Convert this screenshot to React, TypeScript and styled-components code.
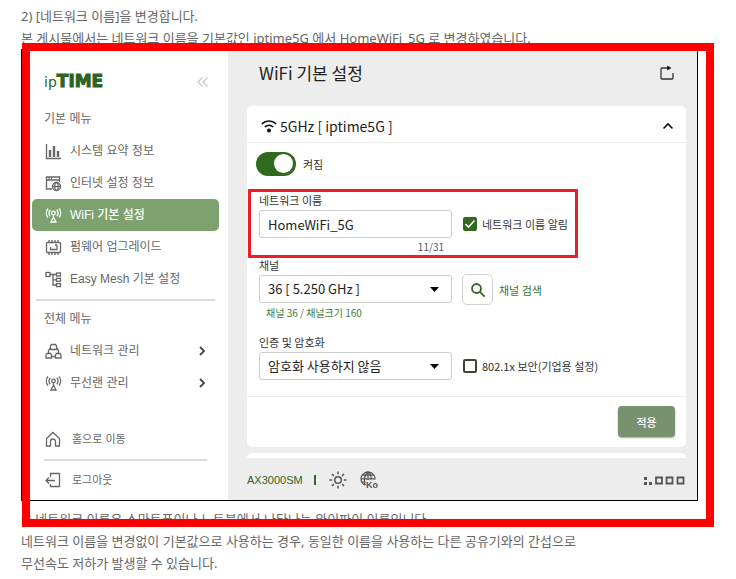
import React, { useState } from "react";
import styled, { createGlobalStyle, css } from "styled-components";

const green = "#2f6a1e";
const sansKr = `"Noto Sans CJK KR", sans-serif`;
const menuFont = `"Liberation Sans", "Noto Sans CJK KR", sans-serif`;

const GlobalStyle = createGlobalStyle`
  *, *::before, *::after { box-sizing: border-box; }
  body { margin: 0; background: #fff; }
  button, input, select { font: inherit; color: inherit; margin: 0; padding: 0; }
  svg { display: block; flex: none; }
`;

const Article = styled.article`
  padding: 5px 38px 0 21px;
  overflow: hidden;
  font: 13px/22px "Noto Sans", ${sansKr};
  color: #666;
`;

const Paragraph = styled.p`
  margin: 0;
  white-space: nowrap;
`;

const Figure = styled.figure`
  position: relative;
  margin: 0 0 7px;
  border: 1px solid #000;
`;

const FigureFrame = styled.div`
  position: absolute;
  inset: -7px -17px -27px 0;
  border: 8px solid #f00;
  pointer-events: none;
`;

const Router = styled.div`
  display: grid;
  grid-template-columns: 206px minmax(0, 1fr);
  background: #ededed;
`;

const Sidebar = styled.aside`
  display: flex;
  flex-direction: column;
  padding: 0 9px 4px 10px;
  background: #fff;
  font: 12px/16px ${menuFont};
  color: #666;
`;

const Brand = styled.div`
  display: flex;
  align-items: center;
  justify-content: space-between;
  height: 51px;
  padding: 12px 10px 0 12px;
`;

const Logo = styled.div`
  display: flex;
  align-items: baseline;
  font: 14px/20px "DejaVu Sans", sans-serif;
  color: #2d641c;
`;

const LogoWide = styled.span`
  font: bold 17px/20px "DejaVu Sans", sans-serif;
  -webkit-text-stroke: 1px #2d641c;
`;

const IconButton = styled.button`
  display: flex;
  border: 0;
  background: none;
`;

const MenuLabel = styled.h2`
  height: 34px;
  margin: 0;
  padding: 2px 12px 0;
  font-size: 12px;
  line-height: 32px;
  font-weight: 400;
`;

const MenuList = styled.nav`
  display: flex;
  flex-direction: column;
`;

const MenuItem = styled.a<{ $active?: boolean; $small?: boolean }>`
  display: flex;
  align-items: center;
  gap: ${(p) => (p.$small ? "10px" : "8px")};
  height: 32px;
  padding: 0 10px 0 13px;
  border-radius: 5px;
  color: inherit;
  font-size: ${(p) => (p.$small ? "11px" : "12px")};
  text-decoration: none;
  ${(p) =>
    p.$active &&
    css`
      background: #7da270;
      color: #fff;
      font-weight: 500;
    `}
`;

const MenuText = styled.span`
  flex: 1;
`;

const Rule = styled.hr<{ $inset?: boolean }>`
  width: auto;
  height: 2px;
  margin: ${(p) => (p.$inset ? "4px 12px 3px" : "4px 4px 0")};
  border: 0;
  background: #dcdcd6;
`;

const Spacer = styled.div`
  flex: 1;
  min-height: 24px;
`;

const Main = styled.main`
  display: flex;
  flex-direction: column;
  font: 11px/18px ${sansKr};
  color: #333;
`;

const TitleBar = styled.header`
  display: flex;
  align-items: center;
  justify-content: space-between;
  height: 56px;
  padding: 0 22px 10px 31px;
`;

const Title = styled.h1`
  margin: 0;
  font-size: 17px;
  line-height: 24px;
  font-weight: 400;
  color: #222;
`;

const Card = styled.section`
  margin: 0 11px 0 19px;
  border-radius: 5px;
  background: #fff;
`;

const NextCard = styled.div`
  height: 5px;
  margin: 6px 11px 0 19px;
  border-radius: 5px 5px 0 0;
  background: #fff;
`;

const CardHeader = styled.header`
  display: flex;
  align-items: center;
  gap: 3px;
  height: 37px;
  padding: 4px 11px 0 14px;
  border-bottom: 1px solid #eee;
  color: #1c1c1c;
`;

const CardTitle = styled.h2`
  flex: 1;
  margin: 0;
  font-size: 14px;
  line-height: 20px;
  font-weight: 400;
`;

const CardBody = styled.div`
  padding: 9px 12px 16px;
`;

const CardFooter = styled.footer`
  display: flex;
  justify-content: flex-end;
  padding: 9px 11px 10px;
  border-top: 1px solid #eee;
`;

const SwitchLabel = styled.label`
  display: flex;
  align-items: center;
  gap: 7px;
  margin: 0 0 15px -3px;
`;

const Switch = styled.input`
  appearance: none;
  width: 40px;
  height: 24px;
  padding: 2px 3px;
  border-radius: 12px;
  background: #999;
  &::before {
    content: "";
    display: block;
    width: 19px;
    height: 19px;
    border-radius: 50%;
    background: #fff;
  }
  &:checked {
    background: ${green};
  }
  &:checked::before {
    margin-left: auto;
  }
`;

const Field = styled.div<{ $spaced?: boolean }>`
  position: relative;
  width: fit-content;
  margin-bottom: ${(p) => (p.$spaced ? "10px" : "0")};
`;

const FieldLabel = styled.label`
  display: block;
  line-height: 19px;
`;

const FieldRow = styled.div`
  display: grid;
  grid-template-columns: 193px max-content;
  align-items: center;
  gap: 11px;
`;

const Highlight = styled.div`
  position: absolute;
  inset: -2px -10px -2px -11px;
  border: 3px solid #ee1c25;
  border-radius: 1px;
  pointer-events: none;
`;

const control = css`
  width: 100%;
  height: 28px;
  padding: 0 8px;
  border: 1px solid #ccc;
  border-radius: 3px;
  background: #fff;
  color: #222;
  font-size: 13px;
`;

const TextInput = styled.input`
  ${control}
`;

const SelectBox = styled.div`
  position: relative;
`;

const Select = styled.select`
  ${control}
  appearance: none;
  display: block;
`;

const Caret = styled.svg`
  position: absolute;
  top: 12px;
  right: 13px;
  pointer-events: none;
`;

const Hint = styled.p<{ $end?: boolean }>`
  width: 193px;
  margin: 0;
  padding: 0 8px 0 7px;
  font-size: 10px;
  line-height: ${(p) => (p.$end ? "18px" : "20px")};
  text-align: ${(p) => (p.$end ? "right" : "left")};
  color: ${(p) => (p.$end ? "#555" : "#44793a")};
`;

const CheckLabel = styled.label`
  display: flex;
  align-items: center;
  gap: 5px;
`;

const CheckHolder = styled.span`
  position: relative;
  display: flex;
`;

const CheckInput = styled.input`
  appearance: none;
  width: 14px;
  height: 14px;
  border: 2px solid #3d4638;
  border-radius: 2px;
  &:checked {
    border-color: ${green};
    background: ${green};
  }
`;

const CheckMark = styled.svg`
  position: absolute;
  inset: 0;
  pointer-events: none;
`;

const SearchGroup = styled.div`
  display: flex;
  align-items: center;
  gap: 6px;
  margin: -1px 0 -2px -1px;
  color: #3b7430;
`;

const SearchButton = styled.button`
  display: grid;
  place-items: center;
  width: 31px;
  height: 31px;
  border: 1px solid #d0d0d0;
  border-radius: 5px;
  background: #fff;
  color: ${green};
`;

const ApplyButton = styled.button`
  width: 57px;
  height: 31px;
  border: 0;
  border-radius: 4px;
  background: #789270;
  color: #fff;
  font-weight: 500;
  box-shadow: 0 1px 2px rgba(0, 0, 0, 0.35);
`;

const StatusBar = styled.footer`
  display: flex;
  align-items: center;
  height: 42px;
  padding: 2px 12px 0 19px;
  font: 11px/16px "Liberation Sans", sans-serif;
  color: #2f641f;
`;

const Divider = styled.span`
  width: 2px;
  height: 10px;
  margin: 0 13px 0 11px;
  background: ${green};
`;

const StatusTools = styled.div`
  display: flex;
  flex: 1;
  gap: 13px;
  color: #555;
`;

type IconName =
  | "chart" | "internet" | "antenna" | "firmware" | "mesh" | "network" | "home" | "logout";

const drawings: Record<IconName, React.ReactNode> = {
  chart: (
    <>
      <path d="M1.5 1v14.500H16" />
      <path d="M5 7v7M9 3v11M13 8v6" strokeWidth="2.4" />
    </>
  ),
  internet: (
    <>
      <path d="M7 14H1.5V2h13v5M1.5 5h13M3.5 3.5h1M6 3.5h1" />
      <circle cx="11.5" cy="11.5" r="4" />
      <ellipse cx="11.5" cy="11.5" rx="1.7" ry="4" />
      <path d="M7.5 11.5h8" />
    </>
  ),
  antenna: (
    <>
      <circle cx="8.500" cy="6" r="1.800" />
      <path d="M8.500 8v3M8.500 10 6 15h5zM5.300 9.200a4.500 4.500 0 0 1 0-6.400M11.700 9.200a4.500 4.500 0 0 0 0-6.400M3 10.500a7 7 0 0 1 0-9M14 10.500a7 7 0 0 0 0-9" />
    </>
  ),
  firmware: (
    <>
      <rect x="1.5" y="3.5" width="14" height="10" rx="1" />
      <path d="M4 1v2.500M7 1v2.500M10 1v2.500M13 1v2.500M4 13.500V16M7 13.500V16M10 13.500V16M13 13.500V16M12 6v4.500H5.500V8M10 6h2" />
    </>
  ),
  mesh: (
    <>
      <rect x="1" y="1.5" width="4" height="4" />
      <rect x="11.500" y="2" width="4" height="3" />
      <rect x="11.500" y="7.300" width="4" height="3" />
      <rect x="11.500" y="12.600" width="4" height="3" />
      <path d="M5 3.500h6.500M8 3.500V14h3.500M8 8.800h3.500" />
    </>
  ),
  network: (
    <>
      <path d="M5.500 6.500V3l1-1.500h4l1 1.500v3.500z" />
      <path d="M1 15v-3l1-1.500h3.500l1 1.500v3zM10.500 15v-3l1-1.500H15l1 1.500v3z" />
      <path d="M5.500 4.500 3.500 7.500v3M11.500 4.500l2 3v3M6.500 13.500h4" />
    </>
  ),
  home: <path d="M1.500 7.500 8 1.500l6.500 6V15h-4v-4.500a2.500 2.500 0 0 0-5 0V15h-4z" />,
  logout: <path d="M5.500 5V1.500h9v13h-9V12M10 8.500H1M4 5.500l-3 3 3 3" />,
};

const Icon = ({ name }: { name: IconName }) => (
  <svg width="17" height="17" viewBox="0 0 17 17" fill="none" stroke="currentColor" strokeWidth="1.300" aria-hidden="true">
    {drawings[name]}
  </svg>
);

const Chevron = () => (
  <svg width="12" height="12" viewBox="0 0 12 12" fill="none" stroke="#444" strokeWidth="1.800" aria-hidden="true">
    <path d="m3 2 4 4-4 4" />
  </svg>
);

const DownCaret = () => (
  <Caret width="9" height="5" viewBox="0 0 9 5" aria-hidden="true">
    <path d="M0 0h9L4.500 5z" fill="#000" />
  </Caret>
);

const Check = ({ label, initial }: { label: string; initial: boolean }) => {
  const [on, setOn] = useState(initial);
  return (
    <CheckLabel>
      <CheckHolder>
        <CheckInput type="checkbox" checked={on} onChange={() => setOn(!on)} />
        {on && (
          <CheckMark width="14" height="14" viewBox="0 0 14 14" fill="none" stroke="#fff" strokeWidth="1.600">
            <path d="m2.500 7 3 3 6-6.500" />
          </CheckMark>
        )}
      </CheckHolder>
      {label}
    </CheckLabel>
  );
};

const basicMenu: { icon: IconName; text: string; active?: boolean }[] = [
  { icon: "chart", text: "시스템 요약 정보" },
  { icon: "internet", text: "인터넷 설정 정보" },
  { icon: "antenna", text: "WiFi 기본 설정", active: true },
  { icon: "firmware", text: "펌웨어 업그레이드" },
  { icon: "mesh", text: "Easy Mesh 기본 설정" },
];

const fullMenu: { icon: IconName; text: string }[] = [
  { icon: "network", text: "네트워크 관리" },
  { icon: "antenna", text: "무선랜 관리" },
];

const SideMenu = () => (
  <Sidebar>
    <Brand>
      <Logo>ip<LogoWide>TIME</LogoWide></Logo>
      <IconButton aria-label="메뉴 접기">
        <svg width="12" height="12" viewBox="0 0 12 12" fill="none" stroke="#c4c4c4" strokeWidth="1.200">
          <path d="M5.500 1.500 1 6l4.500 4.500M10.500 1.500 6 6l4.500 4.500" />
        </svg>
      </IconButton>
    </Brand>
    <MenuLabel>기본 메뉴</MenuLabel>
    <MenuList>
      {basicMenu.map((m) => (
        <MenuItem key={m.text} href="#" $active={m.active}>
          <Icon name={m.icon} />
          <MenuText>{m.text}</MenuText>
        </MenuItem>
      ))}
    </MenuList>
    <Rule />
    <MenuLabel>전체 메뉴</MenuLabel>
    <MenuList>
      {fullMenu.map((m) => (
        <MenuItem key={m.text} href="#">
          <Icon name={m.icon} />
          <MenuText>{m.text}</MenuText>
          <Chevron />
        </MenuItem>
      ))}
    </MenuList>
    <Spacer />
    <MenuItem href="#" $small><Icon name="home" /><MenuText>홈으로 이동</MenuText></MenuItem>
    <Rule $inset />
    <MenuItem href="#" $small><Icon name="logout" /><MenuText>로그아웃</MenuText></MenuItem>
  </Sidebar>
);

const WifiSettings = () => {
  const [enabled, setEnabled] = useState(true);
  const [name, setName] = useState("HomeWiFi_5G");
  return (
    <Main>
      <TitleBar>
        <Title>WiFi 기본 설정</Title>
        <IconButton aria-label="새로고침">
          <svg width="16" height="16" viewBox="0 0 16 16" fill="none" stroke="#333" strokeWidth="1.300">
            <path d="M9 3H3a1 1 0 0 0-1 1v9a1 1 0 0 0 1 1h10a1 1 0 0 0 1-1V8" />
            <path d="M8.500 1v4L12 3z" fill="#111" stroke="#111" strokeWidth=".5" />
          </svg>
        </IconButton>
      </TitleBar>
      <Card>
        <CardHeader>
          <svg width="16" height="16" viewBox="0 0 16 16" fill="none" stroke="#111" strokeWidth="1.600" aria-hidden="true">
            <path d="M.8 5.800a10.500 10.500 0 0 1 14.400 0M3.800 9a6.300 6.300 0 0 1 8.400 0" />
            <circle cx="8" cy="12.500" r="2" fill="#111" stroke="none" />
          </svg>
          <CardTitle>5GHz [ iptime5G ]</CardTitle>
          <IconButton aria-label="접기">
            <svg width="14" height="14" viewBox="0 0 14 14" fill="none" stroke="#111" strokeWidth="1.600">
              <path d="m2.500 9.500 4.500-4.500 4.500 4.500" />
            </svg>
          </IconButton>
        </CardHeader>
        <CardBody>
          <SwitchLabel>
            <Switch type="checkbox" role="switch" checked={enabled} onChange={() => setEnabled(!enabled)} />
            켜짐
          </SwitchLabel>
          <Field>
            <FieldLabel htmlFor="ssid">네트워크 이름</FieldLabel>
            <FieldRow>
              <TextInput id="ssid" type="text" maxLength={31} value={name} onChange={(e) => setName(e.target.value)} />
              <Check label="네트워크 이름 알림" initial />
            </FieldRow>
            <Hint $end>{name.length}/31</Hint>
            <Highlight />
          </Field>
          <Field $spaced>
            <FieldLabel htmlFor="channel">채널</FieldLabel>
            <FieldRow>
              <SelectBox>
                <Select id="channel"><option>36 [ 5.250 GHz ]</option></Select>
                <DownCaret />
              </SelectBox>
              <SearchGroup>
                <SearchButton id="scan" aria-labelledby="scan-label">
                  <svg width="16" height="16" viewBox="0 0 16 16" fill="none" stroke="currentColor" strokeWidth="1.800">
                    <circle cx="6.500" cy="6.500" r="4.500" />
                    <path d="m9.800 9.800 4.900 4.900" />
                  </svg>
                </SearchButton>
                <label id="scan-label" htmlFor="scan">채널 검색</label>
              </SearchGroup>
            </FieldRow>
            <Hint>채널 36 / 채널크기 160</Hint>
          </Field>
          <Field>
            <FieldLabel htmlFor="security">인증 및 암호화</FieldLabel>
            <FieldRow>
              <SelectBox>
                <Select id="security"><option>암호화 사용하지 않음</option></Select>
                <DownCaret />
              </SelectBox>
              <Check label="802.1x 보안(기업용 설정)" initial={false} />
            </FieldRow>
          </Field>
        </CardBody>
        <CardFooter><ApplyButton>적용</ApplyButton></CardFooter>
      </Card>
      <NextCard />
      <StatusBar>
        AX3000SM
        <Divider />
        <StatusTools>
          <IconButton aria-label="화면 밝기">
            <svg width="18" height="18" viewBox="0 0 18 18" fill="none" stroke="#555" strokeWidth="1.500">
              <circle cx="9" cy="9" r="3.300" />
              <path d="M9 .5v2.700M9 14.800v2.700M.5 9h2.700M14.800 9h2.700M3 3l1.900 1.900M13.100 13.100 15 15M15 3l-1.900 1.900M4.900 13.100 3 15" />
            </svg>
          </IconButton>
          <IconButton aria-label="언어">
            <svg width="18" height="18" viewBox="0 0 18 18" fill="none" stroke="#555" strokeWidth="1.200">
              <path d="M5 14.300A7 7 0 1 1 15 8.500M1 7.800h14M2 4.200h12M2 11.200h3.500M8 .8C3.500 4.500 4 11 5.500 14M8 .8c2.500 2 3.300 4.700 3.200 7.700M8 .8V9" />
              <text x="6" y="17" fill="#555" stroke="none" fontFamily="Liberation Sans, sans-serif" fontSize="9" fontWeight="bold">Ko</text>
            </svg>
          </IconButton>
        </StatusTools>
        <svg width="41" height="9" viewBox="0 0 41 9" fill="none" stroke="#555" strokeWidth="2" aria-hidden="true">
          <path d="M0 2.500h3M0 7.500h3M5 7.500h3" strokeWidth="3" />
          <path d="M12 1.500h6v6h-6zM22.500 1.500h6v6h-6zM33.500 1.500h6v6h-6z" strokeWidth="1.800" />
        </svg>
      </StatusBar>
    </Main>
  );
};

export default function App() {
  return (
    <>
      <GlobalStyle />
      <Article>
        <Paragraph>2) [네트워크 이름]을 변경합니다.</Paragraph>
        <Paragraph>본 게시물에서는 네트워크 이름을 기본값인 iptime5G 에서 HomeWiFi_5G 로 변경하였습니다.</Paragraph>
        <Figure>
          <Router>
            <SideMenu />
            <WifiSettings />
          </Router>
          <FigureFrame />
        </Figure>
        <Paragraph>※ 네트워크 이름은 스마트폰이나 노트북에서 나타나는 와이파이 이름입니다.</Paragraph>
        <Paragraph>네트워크 이름을 변경없이 기본값으로 사용하는 경우, 동일한 이름을 사용하는 다른 공유기와의 간섭으로</Paragraph>
        <Paragraph>무선속도 저하가 발생할 수 있습니다.</Paragraph>
      </Article>
    </>
  );
}
